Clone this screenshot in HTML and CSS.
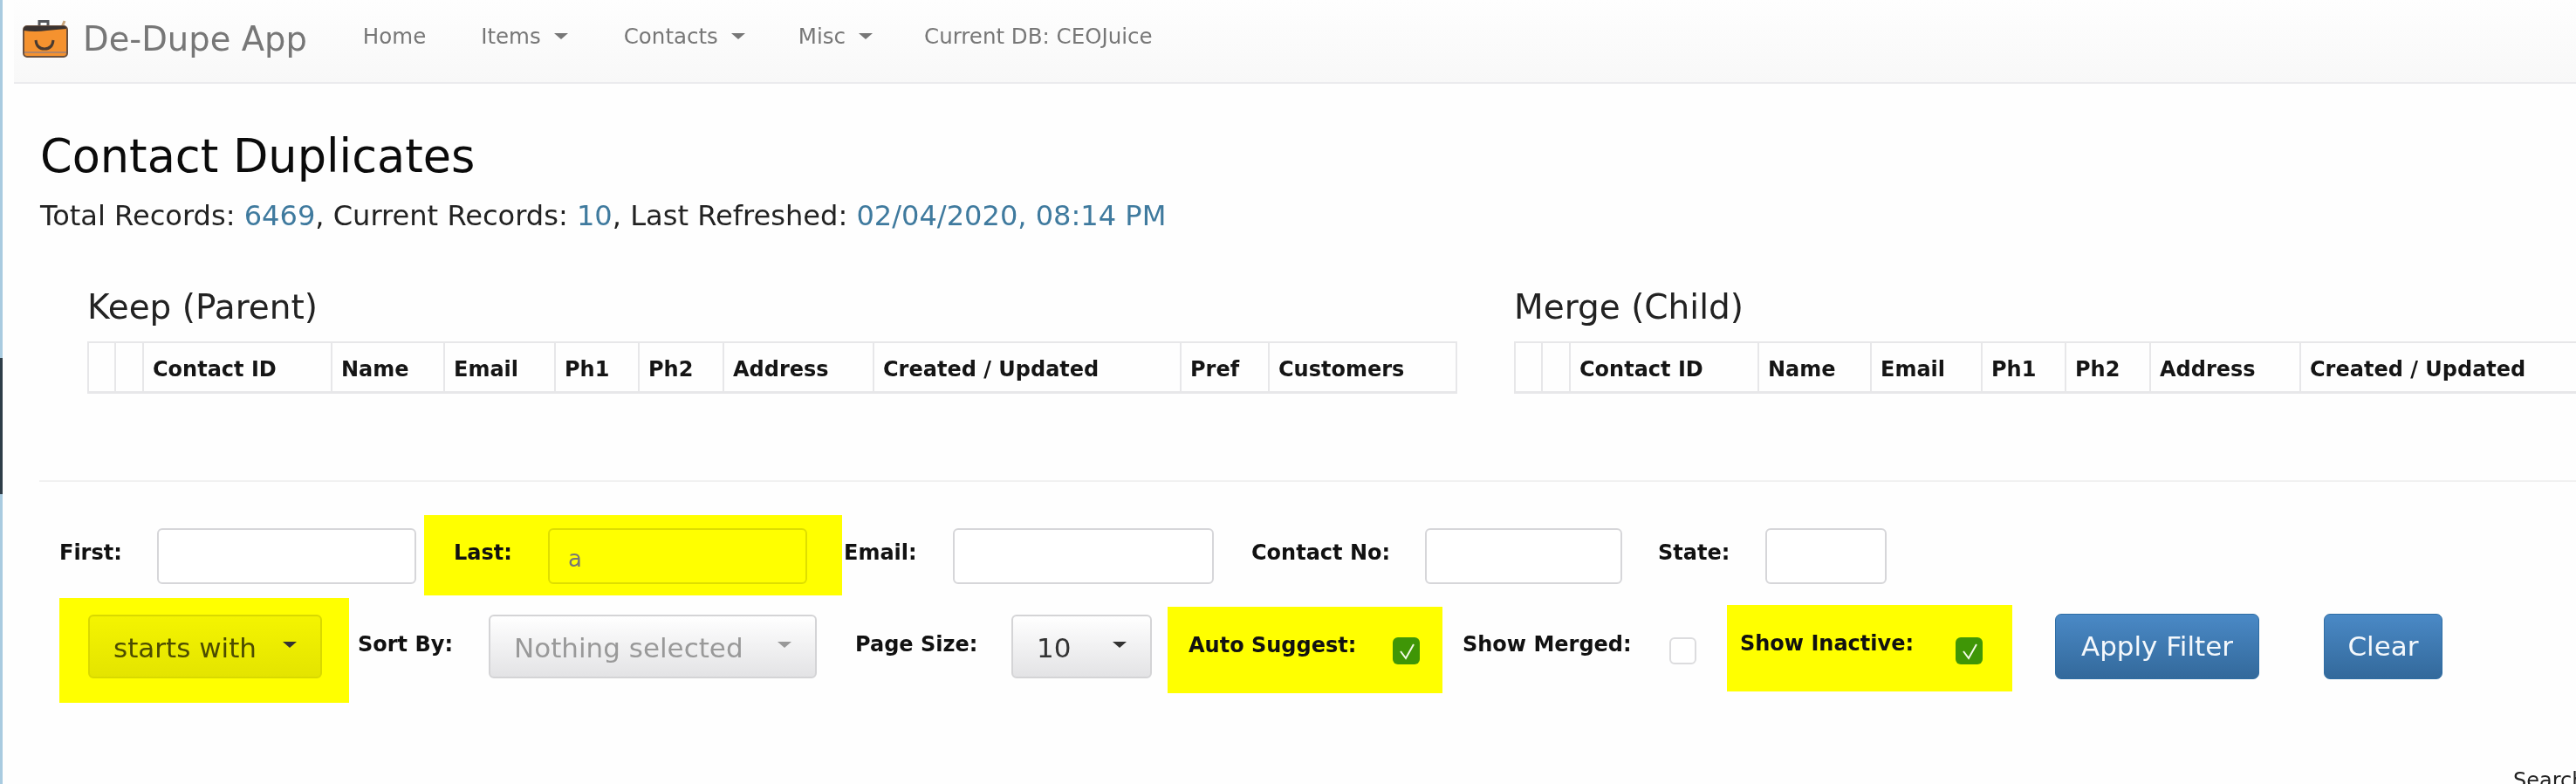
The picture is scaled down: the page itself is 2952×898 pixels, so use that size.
FILE: index.html
```html
<!DOCTYPE html>
<html lang="en">
<head>
<meta charset="utf-8">
<title>De-Dupe App</title>
<link rel="stylesheet" href="styles.css">
</head>
<body>
<div class="edge"><div class="edge-top"></div><div class="edge-dark"></div><div class="edge-bottom"></div></div>
<main class="page">
  <nav class="navbar">
    <svg class="logo" viewBox="0 0 52 44" aria-hidden="true">
      <path d="M19 9V2.500h10V9" fill="none" stroke="#55565a" stroke-width="3"/>
      <path d="M45 9l3-7" stroke="#c9a57a" stroke-width="3"/>
      <rect x="1" y="8" width="50" height="35" rx="4" fill="#f5922f" stroke="#6b5140" stroke-width="2"/>
      <path d="M1 12q0-4 4-4h42q3 0 3 3q-12 1-22 2q-14 2-27 0z" fill="#3a3331"/>
      <path d="M2 37h48v2H2z" fill="#b08468"/>
      <path d="M15 24q1 10 10 10t10-10" fill="none" stroke="#4a3a30" stroke-width="3"/>
    </svg>
    <a class="brand">De-Dupe App</a>
    <a class="nav-link nav-home">Home</a>
    <a class="nav-link nav-items">Items<span class="caret"></span></a>
    <a class="nav-link nav-contacts">Contacts<span class="caret"></span></a>
    <a class="nav-link nav-misc">Misc<span class="caret"></span></a>
    <a class="nav-link nav-db">Current DB: CEOJuice</a>
  </nav>

  <section class="heading">
    <h1>Contact Duplicates</h1>
    <p class="stats">Total Records: <span class="num">6469</span>, Current Records: <span class="num">10</span>, Last Refreshed: <span class="num">02/04/2020, 08:14 PM</span></p>
  </section>

  <section class="compare">
    <div class="panel panel-keep">
      <h2>Keep (Parent)</h2>
      <table>
        <thead><tr><th></th><th></th><th>Contact ID</th><th>Name</th><th>Email</th><th>Ph1</th><th>Ph2</th><th>Address</th><th>Created / Updated</th><th>Pref</th><th>Customers</th></tr></thead>
      </table>
    </div>
    <div class="panel panel-merge">
      <h2>Merge (Child)</h2>
      <table>
        <thead><tr><th></th><th></th><th>Contact ID</th><th>Name</th><th>Email</th><th>Ph1</th><th>Ph2</th><th>Address</th><th>Created / Updated</th><th>Pref</th><th>Customers</th></tr></thead>
      </table>
    </div>
  </section>

  <hr class="rule">

  <form class="filters">
    <div class="row row-one">
      <label class="lbl l-first">First:</label>
      <input class="txt i-first" type="text">
      <div class="mark mark-last">
        <label class="lbl l-last">Last:</label>
        <input class="txt i-last" type="text" value="a">
      </div>
      <label class="lbl l-email">Email:</label>
      <input class="txt i-email" type="text">
      <label class="lbl l-contact">Contact No:</label>
      <input class="txt i-contact" type="text">
      <label class="lbl l-state">State:</label>
      <input class="txt i-state" type="text">
    </div>
    <div class="row row-two">
      <div class="mark mark-starts">
        <button class="pick pick-starts" type="button"><span class="soft">starts with</span><span class="caret dark"></span></button>
      </div>
      <label class="lbl l-sort">Sort By:</label>
      <button class="pick pick-sort" type="button"><span class="soft">Nothing selected</span><span class="caret muted"></span></button>
      <label class="lbl l-size">Page Size:</label>
      <button class="pick pick-size" type="button"><span class="soft">10</span><span class="caret dark"></span></button>
      <div class="mark mark-auto">
        <label class="lbl l-auto">Auto Suggest:</label>
        <span class="check on"><svg viewBox="0 0 31 31"><path d="M9 16l6 8 9-16" fill="none" stroke="#f4fbe8" stroke-width="2"/></svg></span>
      </div>
      <label class="lbl l-merged">Show Merged:</label>
      <span class="check off"></span>
      <div class="mark mark-inactive">
        <label class="lbl l-inactive">Show Inactive:</label>
        <span class="check on"><svg viewBox="0 0 31 31"><path d="M9 16l6 8 9-16" fill="none" stroke="#f4fbe8" stroke-width="2"/></svg></span>
      </div>
      <button class="btn btn-apply" type="button"><span class="soft">Apply Filter</span></button>
      <button class="btn btn-clear" type="button"><span class="soft">Clear</span></button>
    </div>
  </form>

  <div class="search">Search:</div>
</main>
</body>
</html>
```

FILE: styles.css
```css
* { box-sizing: border-box; }
html, body { margin: 0; height: 898px; overflow: hidden; }
body {
  display: flex;
  background: #fefefe;
  color: #111;
  font-family: "DejaVu Sans", Verdana, sans-serif;
}
.edge { width: 3px; flex: none; display: flex; flex-direction: column; }
.edge-top { height: 410px; background: #a9cbe0; }
.edge-dark { height: 156px; background: #2e3d48; }
.edge-bottom { flex: 1; background: #a9cbe0; }
.page { width: 2949px; flex: none; }

/* the reference is a soft, upscaled capture: text carries a slight blur */
.brand, .nav-link, h1, .stats, h2, th, .lbl, .soft, .search, .txt { filter: blur(0.6px); }

.navbar {
  margin-left: 13px;
  height: 96px;
  display: flex;
  align-items: center;
  background: linear-gradient(#fefefe, #f8f8f8);
  border-bottom: 2px solid #ebebee;
  white-space: nowrap;
}
.logo { width: 52px; height: 44px; margin: 0 0 6px 10px; flex: none; }
.brand { margin-left: 17px; font-size: 38.500px; color: #777; line-height: 44px; margin-bottom: 4px; }
.nav-link { font-size: 24.500px; color: #777; margin-bottom: 12px; display: flex; align-items: center; }
.nav-home { margin-left: 64px; }
.nav-items { margin-left: 63px; }
.nav-contacts { margin-left: 64px; }
.nav-misc { margin-left: 61px; }
.nav-db { margin-left: 59px; }
.caret {
  display: inline-block;
  flex: none;
  width: 0; height: 0;
  margin-left: 15px;
  border-top: 7px solid #777;
  border-left: 8px solid transparent;
  border-right: 8px solid transparent;
}
.caret.dark { border-top-color: #333; }
.caret.muted { border-top-color: #999; }

.heading { padding-left: 43px; }
h1 { margin: 53px 0 0; font-size: 52.500px; font-weight: 400; line-height: 60px; color: #0b0b0b; }
.stats { margin: 18px 0 0; font-size: 32.100px; line-height: 40px; color: #222; }
.num { color: #3f7a9e; }

.compare { display: flex; margin-top: 63px; padding-left: 97px; }
.panel { flex: none; }
.panel-keep { width: 1570px; margin-right: 65px; }
.panel-merge { width: 1570px; }
h2 { margin: 2px 0 19px 0; font-size: 39px; font-weight: 400; line-height: 40px; color: #222; }
table { width: 1570px; table-layout: fixed; border-collapse: collapse; border: 2px solid #e7e7e9; border-bottom-width: 3px; }
th {
  height: 57px;
  padding: 5px 0 0 10px;
  border-left: 2px solid #e7e7e9;
  font-size: 24px;
  font-weight: 700;
  text-align: left;
  white-space: nowrap;
  color: #151515;
}
th:nth-child(1) { width: 31px; }
th:nth-child(2) { width: 32px; }
th:nth-child(3) { width: 216px; }
th:nth-child(4) { width: 129px; }
th:nth-child(5) { width: 127px; }
th:nth-child(6) { width: 96px; }
th:nth-child(7) { width: 97px; }
th:nth-child(8) { width: 172px; }
th:nth-child(9) { width: 352px; }
th:nth-child(10) { width: 101px; }

.rule { margin: 99px 0 0 42px; border: 0; border-top: 2px solid #f1f1f1; height: 0; }

.filters { margin-top: 38px; }
.row { display: flex; align-items: flex-start; padding-left: 65px; white-space: nowrap; }
.row-one { height: 92px; }
.row-two { height: 120px; margin-top: 3px; }
.mark { background: #ff0; display: flex; align-items: flex-start; flex: none; }
.lbl { font-size: 24px; font-weight: 700; line-height: 30px; color: #111; flex: none; }
.txt {
  height: 64px;
  margin-top: 15px;
  padding: 6px 21px 0;
  flex: none;
  border: 2px solid #d6d6d9;
  border-radius: 6px;
  background: #fff;
  font: 26px "DejaVu Sans", Verdana, sans-serif;
  color: #777;
  outline: 0;
}
.row-one .lbl { margin-top: 28px; }
.l-first { width: 112px; }
.i-first { width: 297px; margin-right: 9px; }
.mark-last { width: 479px; height: 92px; padding-left: 34px; }
.l-last { width: 108px; }
.i-last { width: 297px; background: #ff0; border-color: #dede00; }
.l-email { margin-left: 2px; width: 125px; }
.i-email { width: 299px; }
.l-contact { margin-left: 43px; width: 199px; }
.i-contact { width: 226px; }
.l-state { margin-left: 41px; width: 123px; }
.i-state { width: 139px; }

.pick {
  height: 73px;
  margin-top: 19px;
  flex: none;
  display: flex;
  align-items: center;
  justify-content: space-between;
  padding: 4px 27px 0 27px;
  border: 2px solid #d4d4d6;
  border-radius: 6px;
  background: linear-gradient(#fff, #e3e3e5);
  font: 31px "DejaVu Sans", Verdana, sans-serif;
  color: #333;
}
.pick .caret { margin-top: -8px; }
.mark-starts { width: 332px; height: 120px; padding-left: 33px; }
.pick-starts { width: 268px; margin-top: 19px; background: linear-gradient(#f4f400, #e4e400); border-color: #d9d900; color: #4c4c00; }
.l-sort { margin: 38px 0 0 10px; width: 150px; }
.pick-sort { width: 376px; color: #999; }
.l-size { margin: 38px 0 0 44px; width: 179px; }
.pick-size { width: 161px; }
.mark-auto { width: 315px; height: 99px; margin: 10px 0 0 18px; padding-left: 24px; }
.l-auto { width: 234px; margin-top: 29px; }
.check {
  width: 31px;
  height: 31px;
  flex: none;
  border-radius: 6px;
  display: block;
}
.check svg { display: block; width: 100%; height: 100%; }
.check.on { background: #3f9606; margin-top: 35px; }
.check.off { background: #fff; border: 2px solid #dcdcde; margin-top: 45px; }
.l-merged { margin: 38px 0 0 23px; width: 237px; }
.mark-inactive { width: 327px; height: 99px; margin: 8px 0 0 35px; padding-left: 15px; }
.l-inactive { width: 247px; margin-top: 29px; }
.mark-inactive .check.on { margin-top: 37px; }
.btn {
  height: 75px;
  margin-top: 18px;
  flex: none;
  border: 1px solid #2e6da4;
  border-radius: 7px;
  background: linear-gradient(#4a89c6, #33699b);
  color: #f4f8fc;
  font: 31px "DejaVu Sans", Verdana, sans-serif;
  padding: 0;
}
.btn-apply { width: 234px; margin-left: 49px; }
.btn-clear { width: 136px; margin-left: 74px; }

.search { margin: 74px 0 0 2877px; font-size: 24px; line-height: 30px; white-space: nowrap; color: #222; }
```
